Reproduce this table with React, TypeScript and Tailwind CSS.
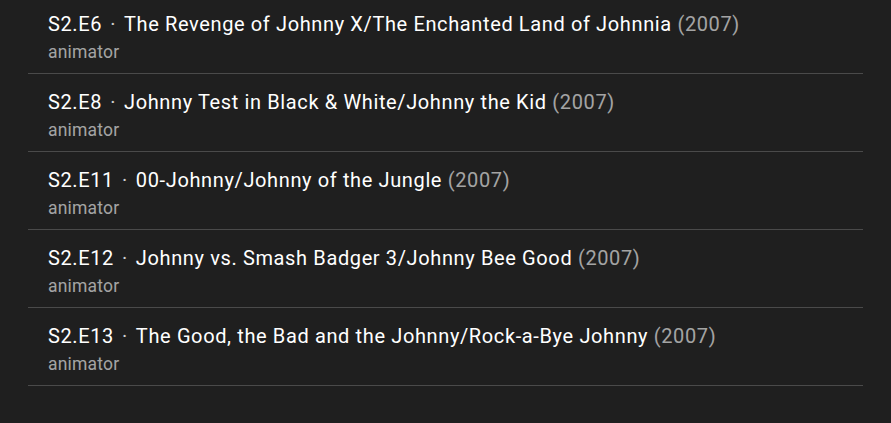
const episodes = [
  { ep: 'S2.E6', title: 'The Revenge of Johnny X/The Enchanted Land of Johnnia', year: 2007 },
  { ep: 'S2.E8', title: 'Johnny Test in Black & White/Johnny the Kid', year: 2007 },
  { ep: 'S2.E11', title: '00-Johnny/Johnny of the Jungle', year: 2007 },
  { ep: 'S2.E12', title: 'Johnny vs. Smash Badger 3/Johnny Bee Good', year: 2007 },
  { ep: 'S2.E13', title: 'The Good, the Bad and the Johnny/Rock-a-Bye Johnny', year: 2007 },
]

export default function App() {
  return (
    <div
      className="min-h-[423px] w-full bg-[#1f1f1f] px-[28px]"
      style={{ fontFamily: 'Roboto, "Liberation Sans", sans-serif' }}
    >
      <ul>
        {episodes.map((e, i) => (
          <li
            key={e.ep}
            className={`border-b border-[#4a4a4a] pl-5 pb-2 ${i === 0 ? 'pt-[9px]' : 'pt-[13px]'}`}
          >
            <div className="text-[20px] leading-[30px] tracking-[0.625px] text-white">
              <span>{e.ep}</span>
              <span className="mx-2 text-white/80">·</span>
              <span>{e.title}</span>{' '}
              <span className="text-white/60">({e.year})</span>
            </div>
            <div className="mt-px text-[17.5px] leading-[25px] tracking-[0.2px] text-white/60">animator</div>
          </li>
        ))}
      </ul>
    </div>
  )
}
